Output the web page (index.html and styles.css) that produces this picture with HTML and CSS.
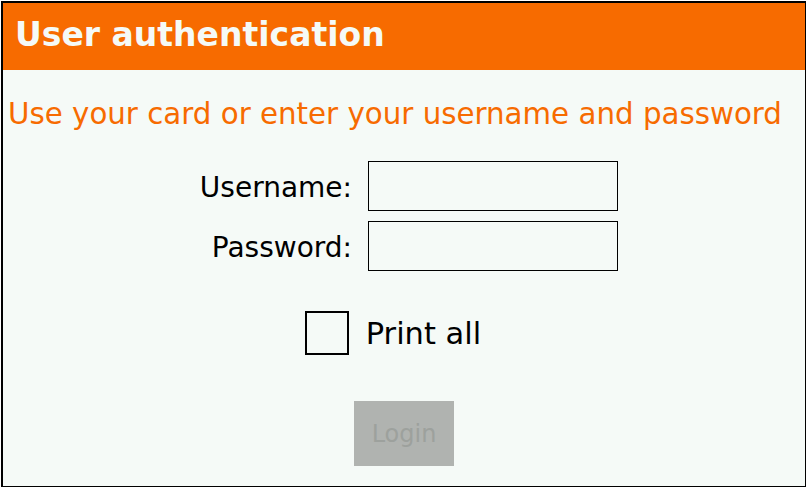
FILE: index.html
```html
<!DOCTYPE html>
<html lang="en">
<head>
  <meta charset="UTF-8">
  <meta name="viewport" content="width=device-width, initial-scale=1.0">
  <title>User authentication</title>
  <link rel="stylesheet" href="styles.css">
</head>
<body>

  <div class="screen">
    <!-- Title bar -->
    <div class="title-bar">User authentication</div>

    <p class="hint">Use your card or enter your username and password</p>

    <!-- Login form -->
    <form class="login-form">
      <div class="fields">
        <label for="username">Username:</label>
        <input type="text" id="username">
        <label for="password">Password:</label>
        <input type="password" id="password">
      </div>

      <label class="print-all">
        <input type="checkbox" id="print-all">
        <span class="box"></span>
        <span>Print all</span>
      </label>

      <div class="actions">
        <button type="submit" disabled>Login</button>
      </div>
    </form>
  </div>

</body>
</html>
```

FILE: styles.css
```css
body {
  margin: 0;
  background: #fff;
  font-family: "DejaVu Sans", sans-serif;
}
.screen {
  box-sizing: border-box;
  width: 805px;
  height: 486px;
  margin: 1px;
  border: 2px solid #000;
  border-right-width: 1px;
  border-bottom-width: 1px;
  background: #f5faf7;
}
.title-bar {
  display: flex;
  align-items: center;
  height: 67px;
  padding: 0 0 5px 12px;
  box-sizing: border-box;
  background: #f76b00;
  color: #f5faf7;
  font-size: 33px;
  font-weight: bold;
}
.hint {
  margin: 27px 0 0 5px;
  color: #f76b00;
  font-size: 29.3px;
  line-height: 34px;
}
.login-form {
  margin: 0;
}
.fields {
  display: grid;
  grid-template-columns: 349px 250px;
  column-gap: 16px;
  row-gap: 10px;
  margin-top: 30px;
  font-size: 28px;
}
.fields label {
  display: flex;
  align-items: center;
  justify-content: flex-end;
  padding-top: 3px;
}
.fields input {
  box-sizing: border-box;
  height: 50px;
  margin: 0;
  border: 1px solid #000;
  border-radius: 0;
  background: transparent;
  font-size: 24px;
}
.print-all {
  display: flex;
  align-items: center;
  justify-content: center;
  gap: 17px;
  height: 44px;
  margin-top: 40px;
  padding-right: 22px;
  font-size: 30.5px;
}
.print-all input {
  display: none;
}
.print-all .box {
  box-sizing: border-box;
  width: 44px;
  height: 44px;
  border: 2px solid #000;
}
.actions {
  display: flex;
  justify-content: center;
  margin-top: 46px;
}
.actions button {
  width: 100px;
  height: 65px;
  border: none;
  border-radius: 0;
  background: #b0b3b0;
  color: #9da19d;
  font-family: "DejaVu Sans", sans-serif;
  font-size: 24px;
}
```
